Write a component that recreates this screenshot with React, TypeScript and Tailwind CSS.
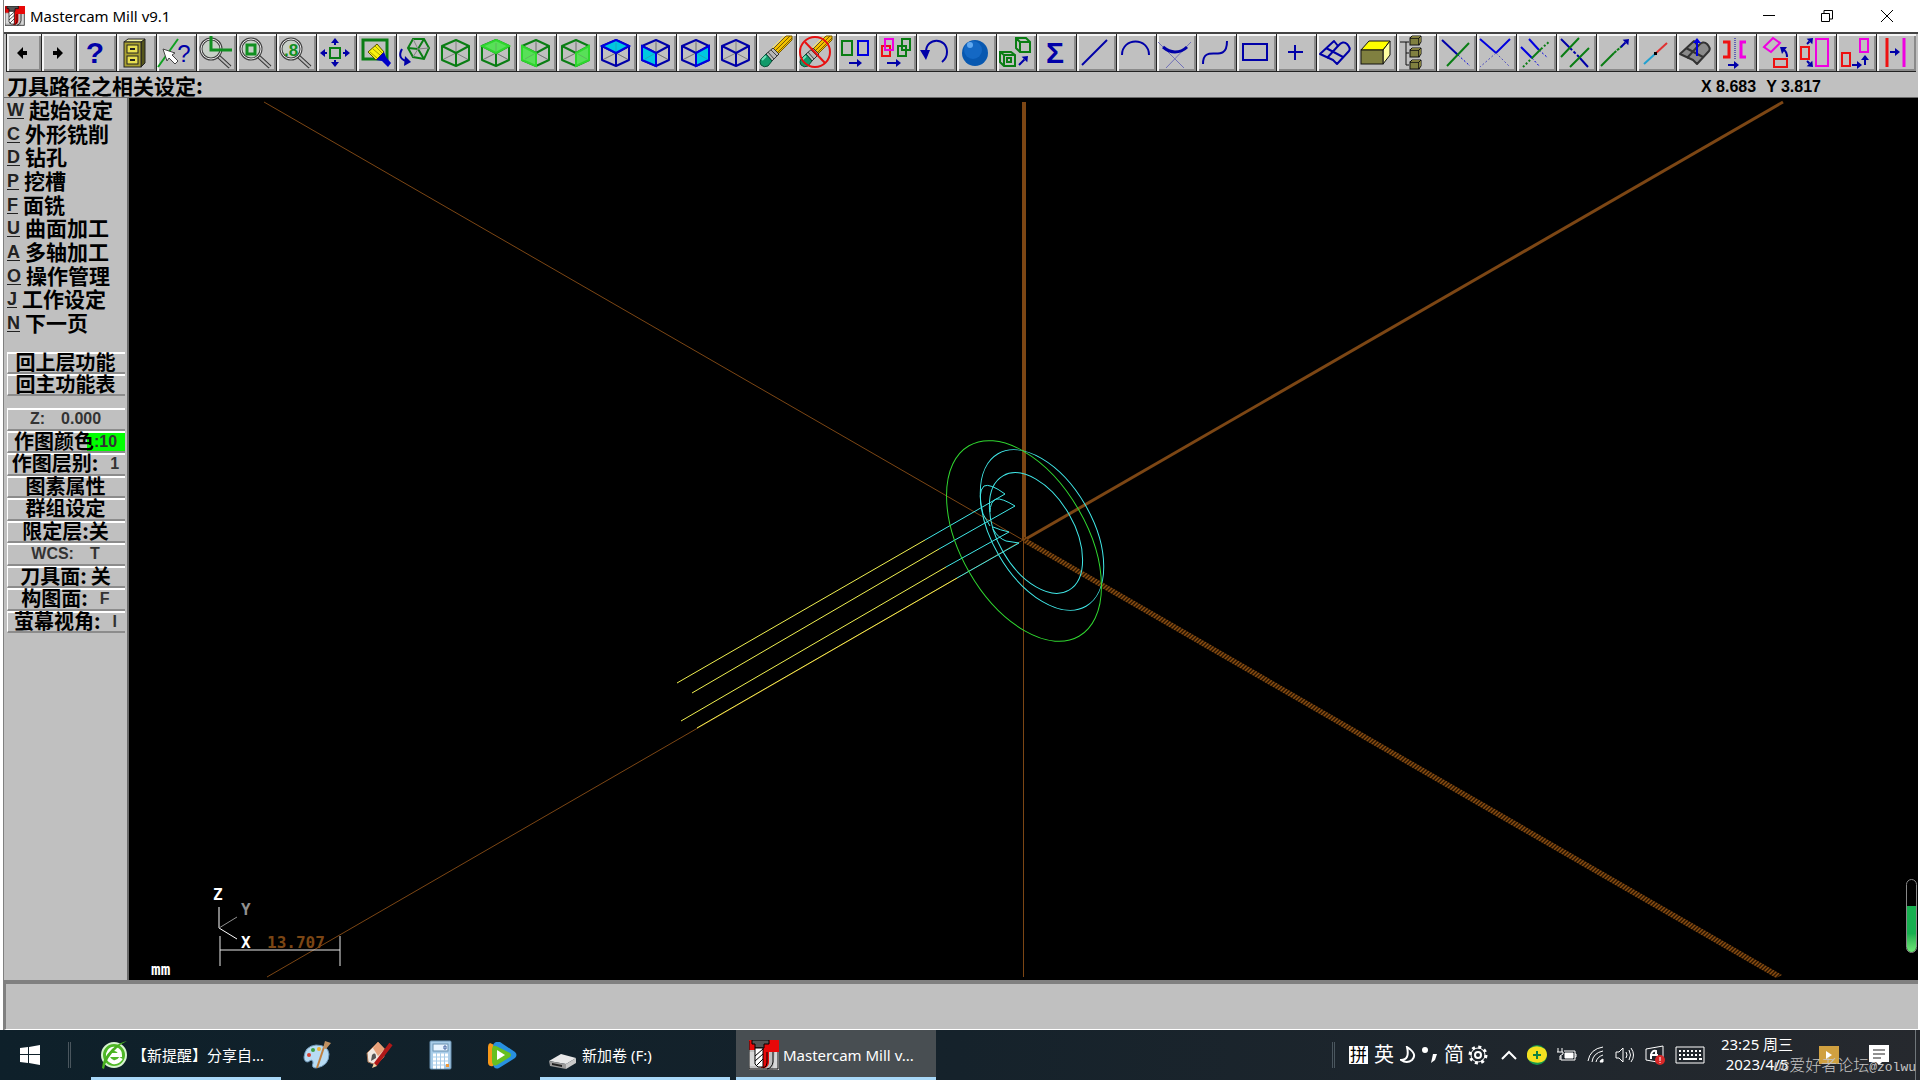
import type { ReactNode } from "react";

const NAVY = "#0000a8";
const BLUE = "#0000e0";
const GREEN = "#0a7d14";
const RED = "#ee1111";
const PINK = "#f000e0";

const Arrow = ({ x1, y1, x2, y2, color = NAVY }: { x1: number; y1: number; x2: number; y2: number; color?: string }) => {
  const a = Math.atan2(y2 - y1, x2 - x1);
  const c = Math.cos(a);
  const s = Math.sin(a);
  const bx = x2 - 5 * c;
  const by = y2 - 5 * s;
  return (
    <g>
      <line x1={x1} y1={y1} x2={bx} y2={by} stroke={color} strokeWidth="2" />
      <polygon points={`${x2},${y2} ${bx - 4 * s},${by + 4 * c} ${bx + 4 * s},${by - 4 * c}`} fill={color} stroke="none" />
    </g>
  );
};

const faces = {
  top: "20,6 33,12 20,19 6,12",
  left: "6,12 20,19 20,32 6,26",
  right: "33,12 20,19 20,32 33,26",
};

const Cube = ({ color, fill, face }: { color: string; fill?: string; face?: "top" | "left" | "right" }) => (
  <g>
    <path d="M20 6V19M20 19L6 26M20 19L33 26" stroke="#808080" />
    <g stroke={color} strokeWidth="2" strokeLinejoin="round">
      <polygon points="20,6 33,12 33,26 20,32 6,26 6,12" />
      <path d="M6 12L20 19L33 12M20 19V32" />
    </g>
    {face && <polygon points={faces[face]} fill={fill} stroke={fill === "#00c8e0" ? BLUE : "#2ed62e"} strokeWidth="2" />}
    {face && <path d="M20 9V17M18 20L9 25M22 20L31 25" stroke="#606060" opacity=".3" />}
  </g>
);

const Lens = ({ children }: { children: ReactNode }) => (
  <g>
    <path d="M22 22L34 33" stroke="#333" strokeWidth="4" />
    <path d="M22 22L34 33" stroke="#bbb" strokeWidth="2" />
    <circle cx="15" cy="15" r="10" fill="#c8d0c8" stroke="#404040" strokeWidth="3" />
    <circle cx="15" cy="15" r="10" stroke="#e8e8e8" />
    {children}
  </g>
);

const Eraser = () => (
  <g>
    <path d="M17 15L30 2H36V6L22 20Z" fill="#f0c000" stroke="#7a5a00" />
    <path d="M19 17L34 2M21 19L36 4" stroke="#7a5a00" />
    <path d="M28 2L16 14" stroke="#ffe860" />
    <path d="M10 20L17 14L23 20L16 27Z" fill="#b8b8b8" stroke="#333" />
    <path d="M12 18L18 25M15 16L21 22" stroke="#444" />
    <path d="M5 25L10 20L16 27L12 32Q8 34 5 31Q3 28 5 25Z" fill="#119a6a" stroke="#075038" />
    <path d="M6 26L10 22" stroke="#6fe0b8" strokeWidth="2" />
  </g>
);

const Surface = ({ color, fill }: { color: string; fill: string }) => (
  <g stroke={color} strokeWidth="2" strokeLinejoin="round">
    <path d="M4 20L18 7L22 12Q27 6 31 10Q35 14 33 17L21 30L17 26Z" fill={fill} />
    <path d="M10 14L27 23M22 12L11 24" />
  </g>
);

const TreeBox = ({ y }: { y: number }) => (
  <g stroke="#111">
    <rect x="14" y={y + 2} width="9" height="7" fill="#808040" />
    <path d={`M14 ${y + 2}l2 -2h9l-2 2zM23 ${y + 2}l2 -2v6l-2 3z`} fill="#f0e868" />
  </g>
);

const tools: { name: string; icon: ReactNode }[] = [
  { name: "Help", icon: <text x="19" y="29" textAnchor="middle" fill={NAVY} className="font-['Liberation_Sans'] text-[30px] font-bold">?</text> },
  {
    name: "File",
    icon: (
      <g stroke="#222">
        <path d="M8 8L12 5H29L26 8Z" fill="#f0f0a0" />
        <path d="M25 8L29 5V29L25 33Z" fill="#55551a" />
        <rect x="8" y="8" width="17" height="25" fill="#a8a030" />
        <rect x="11" y="11" width="11" height="8" fill="#e8e050" />
        <rect x="11" y="22" width="11" height="8" fill="#e8e050" />
        <path d="M14 15H19M14 26H19" strokeWidth="2" />
      </g>
    ),
  },
  {
    name: "Analyze",
    icon: (
      <g>
        <path d="M2 33L22 5" stroke="#10a020" strokeWidth="2" />
        <path d="M7 15L19 19L16 21L22 27L19 30L13 24L11 27Z" fill="#fff" stroke="#444" />
        <text x="28" y="28" textAnchor="middle" fill={NAVY} className="font-['Liberation_Sans'] text-[24px]">?</text>
      </g>
    ),
  },
  { name: "Zoom", icon: <Lens><path d="M15 2V16H36" stroke="#109020" strokeWidth="3" /></Lens> },
  { name: "Zoom window", icon: <Lens><rect x="11" y="11" width="8" height="9" stroke="#109020" strokeWidth="3" /></Lens> },
  {
    name: "Unzoom 0.8",
    icon: (
      <Lens>
        <text x="15" y="22" textAnchor="middle" fill="#109020" className="font-['Liberation_Sans'] text-[17px] font-bold">.8</text>
      </Lens>
    ),
  },
  {
    name: "Fit",
    icon: (
      <g>
        <rect x="14" y="14" width="10" height="10" stroke={GREEN} strokeWidth="2" />
        <Arrow x1={11} y1={19} x2={4} y2={19} />
        <Arrow x1={27} y1={19} x2={34} y2={19} />
        <Arrow x1={19} y1={11} x2={19} y2={4} />
        <Arrow x1={19} y1={26} x2={19} y2={33} />
      </g>
    ),
  },
  {
    name: "Repaint",
    icon: (
      <g>
        <rect x="7" y="6" width="24" height="19" stroke={GREEN} strokeWidth="3" />
        <path d="M12 18L21 10L28 18L20 26Z" fill="#f8f010" stroke="#555500" />
        <path d="M14 18L21 24M17 15L24 21M19 12L26 19" stroke="#a0a000" />
        <path d="M20 26L28 18L30 23L35 29L32 33L26 27Z" fill="#0000c8" />
      </g>
    ),
  },
  {
    name: "Dynamic",
    icon: (
      <g>
        <path d="M17 5L28 5L33 14L28 25L17 23L12 14Z" stroke={GREEN} strokeWidth="2" />
        <path d="M12 14L22 15L28 5M22 15L28 25" stroke={GREEN} strokeWidth="2" />
        <path d="M17 5L22 15L33 14M22 15L17 23" stroke="#808080" />
        <path d="M6 15Q1 24 10 27" stroke={NAVY} strokeWidth="2" />
        <path d="M9 22L15 28L8 32Z" fill={NAVY} />
      </g>
    ),
  },
  { name: "Isometric", icon: <Cube color={GREEN} /> },
  { name: "Top", icon: <Cube color={GREEN} face="top" fill="#58e058" /> },
  { name: "Front", icon: <Cube color={GREEN} face="left" fill="#58e058" /> },
  { name: "Side", icon: <Cube color={GREEN} face="right" fill="#58e058" /> },
  { name: "Cplane top", icon: <Cube color={NAVY} face="top" fill="#00c8e0" /> },
  { name: "Cplane front", icon: <Cube color={NAVY} face="left" fill="#00c8e0" /> },
  { name: "Cplane side", icon: <Cube color={NAVY} face="right" fill="#00c8e0" /> },
  { name: "Cplane 3D", icon: <Cube color={NAVY} /> },
  { name: "Delete", icon: <Eraser /> },
  {
    name: "Undelete",
    icon: (
      <g>
        <Eraser />
        <circle cx="19" cy="18" r="15" stroke="#e81010" strokeWidth="2" />
        <path d="M9 8L29 29" stroke="#e81010" strokeWidth="2" />
      </g>
    ),
  },
  {
    name: "Change color",
    icon: (
      <g strokeWidth="2">
        <rect x="6" y="7" width="10" height="14" stroke={GREEN} />
        <rect x="22" y="7" width="10" height="14" stroke={BLUE} />
        <Arrow x1={13} y1={29} x2={26} y2={29} />
      </g>
    ),
  },
  {
    name: "Change level",
    icon: (
      <g strokeWidth="2">
        <rect x="6" y="12" width="8" height="10" stroke={RED} />
        <rect x="9" y="5" width="8" height="11" stroke={PINK} />
        <rect x="22" y="12" width="8" height="10" stroke={GREEN} />
        <rect x="26" y="5" width="8" height="11" stroke={GREEN} />
        <Arrow x1={11} y1={29} x2={25} y2={29} />
      </g>
    ),
  },
  {
    name: "Undo",
    icon: (
      <g>
        <path d="M10 18C10 3 31 3 31 18Q31 24 26 28" stroke={NAVY} strokeWidth="2" />
        <path d="M4 16H14L10 26Z" fill={NAVY} />
      </g>
    ),
  },
  {
    name: "Shade",
    icon: (
      <g>
        <circle cx="19" cy="19" r="13" fill="#0858b0" />
        <circle cx="17" cy="16" r="9" fill="#1468c4" />
        <circle cx="14" cy="11" r="3" fill="#60a8f0" />
      </g>
    ),
  },
  {
    name: "Scale view",
    icon: (
      <g stroke={GREEN} strokeWidth="2">
        <path d="M20 4H30L34 8V18H24L20 14ZM20 4L24 8V18M24 8H34" />
        <path d="M4 18H15L19 21V32H8L4 28ZM4 18L8 21V32M8 21H19M11 24H15V28H11Z" />
        <Arrow x1={23} y1={31} x2={32} y2={22} />
      </g>
    ),
  },
  { name: "Statistics", icon: <text x="19" y="29" textAnchor="middle" fill={NAVY} className="font-['Liberation_Sans'] text-[30px] font-bold">Σ</text> },
  { name: "Line", icon: <path d="M6 31L31 6" stroke={NAVY} strokeWidth="2" /> },
  { name: "Arc", icon: <path d="M6 21C6 3 33 3 33 21" stroke={NAVY} strokeWidth="2" /> },
  {
    name: "Fillet",
    icon: (
      <g>
        <path d="M2 8L28 34M35 8L10 34" stroke="#7070b8" />
        <path d="M7 13Q13 18 19 18Q26 18 31 13" stroke={NAVY} strokeWidth="3" />
      </g>
    ),
  },
  { name: "Spline", icon: <path d="M7 30C7 8 31 32 31 7" stroke={NAVY} strokeWidth="2" /> },
  { name: "Rectangle", icon: <rect x="7" y="10" width="24" height="16" stroke={NAVY} strokeWidth="2" /> },
  { name: "Point", icon: <path d="M19 11V26M12 18H27" stroke={NAVY} strokeWidth="2" /> },
  { name: "Surface", icon: <Surface color={NAVY} fill="none" /> },
  {
    name: "Solid",
    icon: (
      <g stroke="#111">
        <path d="M5 16L13 7H34L27 16Z" fill="#ffff00" />
        <path d="M27 16L34 7V21L27 30Z" fill="#ffffa0" />
        <rect x="5" y="16" width="22" height="14" fill="#808040" />
      </g>
    ),
  },
  {
    name: "Solids manager",
    icon: (
      <g>
        <path d="M4 8H13M10 8V31H13M10 19H13" stroke="#111" />
        <TreeBox y={2} />
        <TreeBox y={14} />
        <TreeBox y={26} />
      </g>
    ),
  },
  {
    name: "Trim one",
    icon: (
      <g strokeWidth="2">
        <path d="M6 6L22 21" stroke={NAVY} />
        <path d="M22 21L34 32" stroke={BLUE} strokeWidth="1" strokeDasharray="2 2" />
        <path d="M11 32L33 9" stroke={GREEN} />
      </g>
    ),
  },
  {
    name: "Trim two",
    icon: (
      <g>
        <path d="M4 5L20 19L34 5" stroke={BLUE} strokeWidth="2" />
        <path d="M20 19L34 33M20 19L4 33" stroke="#5050c0" strokeDasharray="2 2" />
      </g>
    ),
  },
  {
    name: "Trim three",
    icon: (
      <g>
        <path d="M13 5L23 16M5 13L16 24" stroke={BLUE} strokeWidth="2" />
        <path d="M23 16L32 24M16 24L24 33" stroke={BLUE} strokeDasharray="2 2" />
        <path d="M16 24L25 15" stroke={GREEN} strokeWidth="2" />
        <path d="M7 33L16 24M25 15L34 7" stroke={GREEN} strokeWidth="2" strokeDasharray="2 2" />
      </g>
    ),
  },
  {
    name: "Divide",
    icon: (
      <g strokeWidth="2">
        <path d="M5 5L14 14M23 23L32 33" stroke={NAVY} />
        <path d="M14 14L23 23" stroke={NAVY} strokeDasharray="3 2" />
        <path d="M5 23L23 4M14 33L33 14" stroke={GREEN} />
      </g>
    ),
  },
  {
    name: "Extend",
    icon: (
      <g>
        <path d="M5 32L18 19" stroke={GREEN} strokeWidth="2" />
        <path d="M18 19L26 12" stroke={GREEN} strokeWidth="2" strokeDasharray="3 1" />
        <Arrow x1={25} y1={13} x2={33} y2={5} />
      </g>
    ),
  },
  {
    name: "Break",
    icon: (
      <g>
        <path d="M8 30L19 20" stroke="#20a0d0" strokeWidth="2" />
        <path d="M19 20L31 9" stroke="#e03030" strokeWidth="2" />
        <rect x="18" y="18" width="3" height="3" fill="#000" />
      </g>
    ),
  },
  {
    name: "Normals",
    icon: (
      <g>
        <Surface color="#333" fill="#8a8a8a" />
        <Arrow x1={21} y1={22} x2={21} y2={4} color={BLUE} />
      </g>
    ),
  },
  {
    name: "Mirror",
    icon: (
      <g>
        <path d="M7 8H13V23H7" stroke={RED} strokeWidth="3" />
        <path d="M30 8H25V23H30" stroke={PINK} strokeWidth="3" />
        <path d="M19 4V26" stroke={NAVY} strokeDasharray="1 1" />
        <Arrow x1={12} y1={31} x2={23} y2={31} />
      </g>
    ),
  },
  {
    name: "Rotate",
    icon: (
      <g strokeWidth="2">
        <path d="M8 13L17 4L24 9L15 18Z" stroke={PINK} />
        <rect x="18" y="25" width="13" height="8" stroke={RED} />
        <path d="M31 23Q31 18 28 16" stroke={NAVY} />
        <path d="M24 13H31L26 20Z" fill={NAVY} />
      </g>
    ),
  },
  {
    name: "Scale",
    icon: (
      <g strokeWidth="2">
        <rect x="5" y="13" width="8" height="12" stroke={RED} />
        <rect x="20" y="5" width="12" height="27" stroke={PINK} />
        <Arrow x1={11} y1={10} x2={17} y2={4} />
        <Arrow x1={11} y1={27} x2={17} y2={33} />
      </g>
    ),
  },
  {
    name: "Translate",
    icon: (
      <g strokeWidth="2">
        <rect x="6" y="19" width="8" height="13" stroke={RED} />
        <rect x="24" y="5" width="8" height="13" stroke={PINK} />
        <Arrow x1={16} y1={31} x2={26} y2={31} />
        <Arrow x1={29} y1={31} x2={29} y2={21} />
      </g>
    ),
  },
  {
    name: "Offset",
    icon: (
      <g>
        <path d="M11 4V33" stroke={RED} strokeWidth="3" />
        <path d="M28 4V33" stroke={PINK} strokeWidth="3" />
        <Arrow x1={14} y1={18} x2={24} y2={18} />
      </g>
    ),
  },
];

const bevel = "shrink-0 bg-[#c0c0c0] shadow-[inset_1px_0_0_#222,inset_0_-1px_0_#222,inset_3px_2px_0_#f4f4f4,inset_-2px_-3px_0_#8a8a8a]";

const Toolbar = () => (
  <div className="flex border-t-2 border-[#444] bg-[#c0c0c0] pl-[2px]">
    <button aria-label="Previous" className={`${bevel} h-[38px] w-[35px]`}>
      <svg viewBox="0 0 35 38" className="h-[38px] w-[35px]">
        <path d="M11 19L17 13V17H21V21H17V25Z" fill="#000" />
      </svg>
    </button>
    <button aria-label="Next" className={`${bevel} h-[38px] w-[35px]`}>
      <svg viewBox="0 0 35 38" className="h-[38px] w-[35px]">
        <path d="M22 19L16 13V17H12V21H16V25Z" fill="#000" />
      </svg>
    </button>
    {tools.map((tool) => (
      <button key={tool.name} aria-label={tool.name} className={`${bevel} h-[38px] w-10`}>
        <svg viewBox="0 0 40 38" fill="none" className="h-[38px] w-10">
          {tool.icon}
        </svg>
      </button>
    ))}
  </div>
);

const AppIcon = ({ className }: { className: string }) => (
  <svg viewBox="0 0 30 30" className={className}>
    <rect width="30" height="30" fill="#c0c0c0" />
    <path d="M0 0H30V12H20V22Q20 26 16 28L12 28V10H0Z" fill="#e80808" />
    <path d="M3 0H20V4H15V8H6V4H3Z" fill="#555" stroke="#000" />
    <path d="M0 12H6V26H0ZM26 12H30V30H24Z" fill="#d8d8d8" />
    <path d="M6 8H14V27H9L6 24Z" fill="#fff" stroke="#000" />
    <path d="M6 16L14 9M6 21L14 14M7 26L14 19" stroke="#000" strokeWidth="1" />
    <path d="M18 12V23Q18 27 14 28M24 12V22Q23 28 18 29" stroke="#000" strokeWidth="1" fill="none" />
    <path d="M0 1V29H29V12" stroke="#111" strokeWidth="1" fill="none" />
  </svg>
);

const TitleBar = () => (
  <header className="flex h-8 items-center bg-white">
    <AppIcon className="ml-px size-5" />
    <h1 className="ml-[5px] grow text-[15px] leading-5 text-black">Mastercam Mill v9.1</h1>
    <button aria-label="Minimize" className="flex w-[58px] justify-center">
      <svg viewBox="0 0 12 12" className="size-3"><path d="M0 5.500H12" stroke="#000" /></svg>
    </button>
    <button aria-label="Restore" className="flex w-[58px] justify-center">
      <svg viewBox="0 0 12 12" className="size-3" fill="none" stroke="#000"><path d="M.5 3.500H8.500V11.500H.5ZM3 3.500V.5H11.500V9H9" /></svg>
    </button>
    <button aria-label="Close" className="flex w-[62px] justify-center">
      <svg viewBox="0 0 12 12" className="size-3"><path d="M0 0L12 12M12 0L0 12" stroke="#000" /></svg>
    </button>
  </header>
);

const menu = [
  ["W", "起始设定"],
  ["C", "外形铣削"],
  ["D", "钻孔"],
  ["P", "挖槽"],
  ["F", "面铣"],
  ["U", "曲面加工"],
  ["A", "多轴加工"],
  ["O", "操作管理"],
  ["J", "工作设定"],
  ["N", "下一页"],
];

const states = [
  { text: "作图层别:", value: "1" },
  { text: "图素属性" },
  { text: "群组设定" },
  { text: "限定层:关" },
  { text: "WCS:", value: "T", latin: true },
  { text: "刀具面:", value: "关", wide: true },
  { text: "构图面:", value: "F" },
  { text: "萤幕视角:", value: "I" },
];

const sideButton =
  "flex w-full items-center justify-center border-t-2 border-b-2 border-l border-t-white border-b-[#8c8c8c] border-l-white pr-[2px] pb-[2px] whitespace-nowrap text-[20px] leading-4 font-bold";
const latin = "pt-[2px] font-['Liberation_Sans'] text-[16px] font-bold text-[#333]";

const Sidebar = () => (
  <aside className="w-[125px] shrink-0 border-r-2 border-[#6a6a6a] bg-[#c0c0c0] pr-[2px] pl-[3px] font-['Noto_Sans_CJK_SC',sans-serif]">
    <nav className="flex h-[236px] flex-col justify-between">
      {menu.map(([key, label]) => (
        <button key={key} className="flex h-[23px] items-center gap-[5px] text-[21px] leading-[23px] font-bold whitespace-nowrap">
          <span className="pt-[2px] font-['Liberation_Sans'] text-[18px] text-[#222] underline underline-offset-2">{key}</span>
          {label}
        </button>
      ))}
    </nav>
    <div className="mt-[18px] grid h-11 grid-rows-2">
      <button className={sideButton}>回上层功能</button>
      <button className={sideButton}>回主功能表</button>
    </div>
    <div className="mt-3 grid h-[225px] auto-rows-fr">
      <button className={sideButton}>
        <span className={`${latin} flex gap-4`}><span>Z:</span><span>0.000</span></span>
      </button>
      <button className={`${sideButton} relative`}>
        <span className="absolute inset-y-0 right-0 w-[38px] bg-[#00ff00]" />
        <span className="relative">作图颜色</span>
        <span className={`${latin} relative`}>:10</span>
      </button>
      {states.map((s) => (
        <button key={s.text} className={sideButton}>
          <span className={s.latin ? latin : ""}>{s.text}</span>
          {s.value && <span className={s.wide ? "ml-1" : `${latin} ${s.latin ? "ml-4" : "ml-3"}`}>{s.value}</span>}
        </button>
      ))}
    </div>
  </aside>
);

const Viewport = () => (
  <main className="relative min-w-0 grow bg-black">
    <svg viewBox="129 98 1789 882" fill="none" className="absolute inset-0 size-full">
      <defs>
        <pattern id="hatch" width="4" height="4" patternUnits="userSpaceOnUse">
          <rect width="4" height="4" fill="#2a1400" />
          <path d="M0 4L4 0M-1 1L1 -1M3 5L5 3" stroke="#8a4e12" strokeWidth="1.400" />
        </pattern>
      </defs>
      <g stroke="#7c4614">
        <path d="M264 102L1023 540L267 977M1023.500 540V977" />
        <path d="M1024 102V540" strokeWidth="4" />
        <path d="M1024 540L1783 102" strokeWidth="3" />
      </g>
      <polygon points="1024,537 1024,543 1776,978 1782,975" fill="url(#hatch)" />
      <g stroke="#f0f050">
        <path d="M677 683L925 540M692 693L939 549M681 721L946 567M697 728L957 578" />
      </g>
      <g stroke="#40e8e8">
        <ellipse cx="1042" cy="530" rx="88" ry="50" transform="rotate(60 1042 530)" />
        <ellipse cx="1036" cy="533" rx="66" ry="38" transform="rotate(60 1036 533)" />
        <path d="M925 540L1005 494Q990 483 984 486Q977 492 983 514L990 526" />
        <path d="M939 549L1015 506Q1002 498 996 499Q990 502 990 512" />
        <path d="M946 567L1009 532Q1000 530 993 527" />
        <path d="M957 578L1019 543L1006 541Q998 538 993 529" />
      </g>
      <ellipse cx="1024" cy="541" rx="110" ry="63" stroke="#30d830" transform="rotate(60 1024 541)" />
      {/* axis gnomon and scale bar */}
      <path d="M219 907V928L237 939" stroke="#fff" />
      <path d="M219 928L237 917" stroke="#909090" />
      <path d="M220 936V966M340 936V966M220 950H340" stroke="#e8e8e8" strokeWidth="1" />
      <g className="font-['DejaVu_Sans_Mono'] text-[16px] font-bold">
        <text x="213" y="900" fill="#fff">Z</text>
        <text x="241" y="915" fill="#909090">Y</text>
        <text x="241" y="948" fill="#fff">X</text>
        <text x="267" y="948" fill="#7c4614">13.707</text>
        <text x="151" y="975" fill="#fff">mm</text>
      </g>
    </svg>
    <div className="absolute right-px bottom-[27px] flex h-[74px] w-[11px] items-end rounded-full border border-[#888]">
      <div className="h-[46px] w-full rounded-b-full bg-linear-to-b from-[#18b050] from-60% to-[#70e878]" />
    </div>
  </main>
);

const Separator = () => <span className="h-[26px] w-[3px] border-x border-[#4a565e]" />;

const pinned = [
  {
    name: "Paint",
    icon: (
      <g>
        <path d="M3 17Q4 6 15 5Q27 5 28 14Q28 26 15 28Q10 28 12 23Q12 18 7 22Q3 22 3 17Z" fill="#b8dcf4" stroke="#7098b8" />
        <circle cx="8" cy="15" r="2" fill="#d84030" />
        <circle cx="12" cy="10" r="2" fill="#40a040" />
        <circle cx="18" cy="9" r="2" fill="#f0b030" />
        <path d="M16 28L23 7" stroke="#c08040" strokeWidth="2" />
        <path d="M22 8L24 1L30 3L25 9Z" fill="#c09060" />
      </g>
    ),
  },
  {
    name: "Sketch",
    icon: (
      <g>
        <path d="M4 13L15 2L21 9V17L13 25L5 22Z" fill="#f0e8e0" stroke="#a07050" />
        <path d="M10 8L15 2L22 9L15 16Z" fill="#e8a078" />
        <path d="M9 15Q13 11 13 18L8 21Z" fill="#555" />
        <path d="M12 25L28 4" stroke="#b01818" strokeWidth="4" />
        <path d="M9 28L11 23L14 26Z" fill="#f0d0a0" />
      </g>
    ),
  },
  {
    name: "Calculator",
    icon: (
      <g>
        <rect x="5" y="1" width="21" height="28" rx="1" fill="#a8cce8" stroke="#6890b0" />
        <rect x="8" y="4" width="15" height="7" fill="#e8f4ff" stroke="#6890b0" />
        <path d="M19 6H21V9H19Z" stroke="#4060a0" />
        <path d="M8 15H24M8 19H24M8 23H24M8 27H20" stroke="#fff" strokeWidth="3" strokeDasharray="3 1" />
        <path d="M21 24H24V27H21Z" fill="#f09838" />
      </g>
    ),
  },
  {
    name: "Video",
    icon: (
      <g>
        <path d="M3 3Q1 4 1 7V23Q2 27 6 26L14 20V8Z" fill="#f89818" />
        <path d="M9 2Q6 3 6 7V24Q7 30 12 28L28 18Q31 15 28 12L13 2Z" fill="#2890e0" />
        <path d="M9 6Q5 5 5 10V22Q6 27 10 25L23 17Q25 15 23 13Z" fill="#68c020" />
        <path d="M10 10V20L18 15Z" fill="#fff" />
      </g>
    ),
  },
];

const Tray = () => (
  <div className="flex h-full items-center text-white">
    <Separator />
    <span className="ml-[14px] flex h-[18px] w-[19px] items-center justify-center bg-white text-[17px] leading-[18px] text-black">拼</span>
    <span className="ml-[6px] text-[20px]">英</span>
    <svg viewBox="0 0 16 18" fill="none" stroke="#fff" strokeWidth="2" className="ml-[6px] h-[18px] w-4"><path d="M7 1Q18 8 12 14Q7 18 1 14Q10 14 7 1Z" /></svg>
    <svg viewBox="0 0 16 18" fill="#fff" className="ml-[6px] h-[18px] w-4"><circle cx="3" cy="4" r="3" /><path d="M11 8H15L13 14L9 17Z" /></svg>
    <span className="ml-[6px] text-[20px]">简</span>
    <svg viewBox="0 0 20 20" fill="none" stroke="#fff" className="ml-1 size-5">
      <circle cx="10" cy="10" r="8" strokeWidth="3" strokeDasharray="3 3.280" />
      <circle cx="10" cy="10" r="7" />
      <circle cx="10" cy="10" r="3" strokeWidth="2" />
    </svg>
    <svg viewBox="0 0 16 10" fill="none" stroke="#fff" className="ml-[13px] h-[10px] w-4"><path d="M1 9L8 2L15 9" strokeWidth="2" /></svg>
    <svg viewBox="0 0 20 20" className="ml-[10px] size-5">
      <circle cx="10" cy="10" r="10" fill="#18984c" />
      <path d="M0 12Q-1 4 6 2Q12 0 18 4Q22 10 18 15Q14 19 6 17Q1 16 0 12Z" fill="#f4e020" />
      <path d="M10 6V14M6 10H14" stroke="#108040" strokeWidth="2" />
    </svg>
    <svg viewBox="0 0 20 14" fill="none" stroke="#fff" className="ml-[10px] h-[14px] w-5">
      <path d="M7 3H18V12H4V8M18 6H19V9H18" />
      <path d="M8 5H16V10H8Z" fill="#fff" />
      <path d="M1 0V4M5 0V4M0 4H6V6L3 8V12" />
    </svg>
    <svg viewBox="0 0 18 18" fill="none" stroke="#fff" className="ml-[10px] size-[18px]">
      <path d="M1 15Q3 3 16 1M5 16Q6 7 16 5M9 16Q10 11 16 9" />
      <path d="M13 16Q13 14 16 13V16Z" fill="#fff" />
    </svg>
    <svg viewBox="0 0 20 16" fill="none" stroke="#fff" className="ml-[10px] h-4 w-5">
      <path d="M1 5H4L8 1V15L4 11H1ZM11 5Q13 8 11 11M14 3Q17 8 14 13M16 1Q21 8 16 15" />
    </svg>
    <svg viewBox="0 0 20 20" fill="none" stroke="#fff" className="ml-[10px] size-5">
      <path d="M1 4L18 1V18L1 15Z" />
      <path d="M6 14V10Q7 5 11 6V9M5 10H13" strokeWidth="2" />
      <circle cx="15" cy="15" r="5" fill="#d82828" stroke="none" />
      <path d="M15 12V16M15 17V18" />
    </svg>
    <svg viewBox="0 0 30 18" fill="none" stroke="#fff" className="ml-[10px] h-[18px] w-[30px]">
      <path d="M1 1H29V17H1Z" />
      <path d="M4 5H27M4 9H27" strokeWidth="2" strokeDasharray="2 2" />
      <path d="M4 13H6M8 13H22M24 13H27" strokeWidth="2" />
    </svg>
    <div className="ml-[14px] w-[76px] pb-[2px] text-center text-[15px] leading-5 whitespace-nowrap">
      <p>23:25 周三</p>
      <p>2023/4/5</p>
    </div>
    <svg viewBox="0 0 20 18" className="ml-[24px] h-[18px] w-5">
      <rect width="20" height="18" fill="#d0a040" />
      <path d="M7 5L13 9L7 13Z" fill="#fff" />
    </svg>
    <svg viewBox="0 0 20 20" className="ml-[30px] size-5">
      <path d="M0 0H20V17H13L10 20L7 17H0Z" fill="#fff" />
      <path d="M4 5H16M4 9H16M4 13H12" stroke="#222" strokeWidth="1" />
    </svg>
    <span className="ml-[26px] mr-1 h-full w-px bg-[#70767a]" />
  </div>
);

const Taskbar = () => (
  <footer className="relative flex h-[50px] shrink-0 items-center bg-linear-to-r from-[#0e202a] via-[#15222b] to-[#26292e]">
    <button aria-label="Start" className="ml-5">
      <svg viewBox="0 0 20 20" fill="#fff" className="size-5"><path d="M0 3L8 2V9H0ZM9 2L20 0V9H9ZM0 10H8V18L0 17ZM9 10H20V20L9 18Z" /></svg>
    </button>
    <span className="ml-7 flex"><Separator /></span>
    <button className="ml-5 flex h-full w-[190px] items-center border-b-3 border-[#a8d8f8] pt-[3px] pl-[9px] text-[15px] whitespace-nowrap text-white">
      <svg viewBox="0 0 28 28" className="size-7 shrink-0">
        <circle cx="14" cy="14" r="12" fill="#50b828" stroke="#d8f4d0" strokeWidth="2" />
        <path d="M21 17Q18 22 13 21Q7 19 8 13Q10 7 15 8Q20 9 20 14H9" fill="none" stroke="#fff" strokeWidth="4" />
        <path d="M2 27Q2 18 12 8Q20 1 27 0Q22 2 17 7Q6 17 4 28Z" fill="#48b020" />
      </svg>
      <span className="ml-1">【新提醒】分享自...</span>
    </button>
    <div className="ml-[20px] flex gap-8">
      {pinned.map((app) => (
        <button key={app.name} aria-label={app.name}>
          <svg viewBox="0 0 30 30" fill="none" className="size-[30px]">{app.icon}</svg>
        </button>
      ))}
    </div>
    <button className="ml-[23px] flex h-full w-[190px] items-center border-b-3 border-[#a8d8f8] pt-[3px] pl-[9px] text-[15px] whitespace-nowrap text-white">
      <svg viewBox="0 0 28 28" className="size-7 shrink-0">
        <path d="M0 20L12 13L27 17L17 23Z" fill="#e8e8e8" />
        <path d="M0 20L17 23V28L1 25Z" fill="#999" />
        <path d="M17 23L27 17V22L17 28Z" fill="#c8c8c8" />
        <path d="M3 22L13 24V26L3 24Z" fill="#222" />
      </svg>
      <span className="ml-[5px]">新加卷 (F:)</span>
    </button>
    <button className="ml-[6px] flex h-full w-[200px] items-center border-b-3 border-[#a8d8f8] bg-[#484e52] pt-[3px] pl-[13px] text-[15px] whitespace-nowrap text-white">
      <AppIcon className="size-[30px] shrink-0" />
      <span className="ml-1">Mastercam Mill v...</span>
    </button>
    <div className="ml-auto h-full"><Tray /></div>
    <p className="absolute right-1 bottom-0 flex items-baseline text-[16px] leading-6 whitespace-nowrap text-[#c4c4c4]">
      <span className="font-['Liberation_Mono'] text-[13px] italic">UG</span>
      <span className="font-light">爱好者论坛</span>
      <span className="font-['Liberation_Mono'] text-[13px]">@zolwu</span>
    </p>
  </footer>
);

const App = () => {
  return (
    <div className="flex h-screen flex-col overflow-hidden bg-white font-['Noto_Sans','Noto_Sans_CJK_SC',sans-serif]">
      <div className="mr-[2px] ml-[3px] flex min-h-0 grow flex-col border-l border-[#808080]">
        <TitleBar />
        <Toolbar />
        <div className="flex h-[25px] items-center justify-between bg-[#c0c0c0] pr-[97px] pl-[3px]">
          <p className="font-['Noto_Sans_CJK_SC',sans-serif] text-[21px] leading-6 font-bold">刀具路径之相关设定:</p>
          <p className="flex gap-[10px] pt-1 font-['Liberation_Sans'] text-[16px] font-bold">
            <span>X 8.683</span>
            <span>Y 3.817</span>
          </p>
        </div>
        <div className="flex min-h-0 grow border-t border-[#6a6a6a]">
          <Sidebar />
          <Viewport />
        </div>
        <div className="h-[50px] shrink-0 border-t-4 border-b border-l-2 border-t-[#808080] border-b-white border-l-[#808080] bg-[#c0c0c0]" />
      </div>
      <Taskbar />
    </div>
  );
};

export default App;
